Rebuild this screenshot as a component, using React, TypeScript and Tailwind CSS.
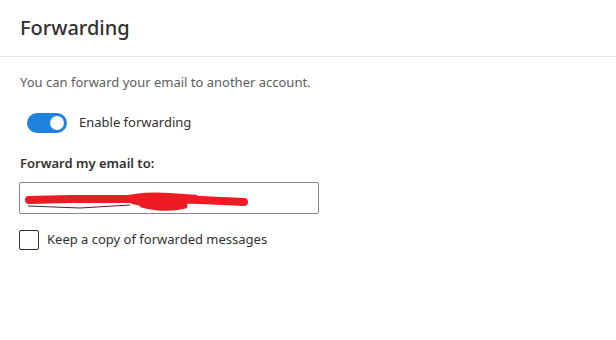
import React from "react";

export default function App() {
  return (
    <div className="w-[616px] h-[340px] bg-white text-[#323130]" style={{ fontFamily: '"Segoe UI", "Noto Sans", "Open Sans", sans-serif' }}>
      <div className="h-[57px] border-b border-[#edebe9] px-5 flex items-center">
        <h1 className="text-[20px] font-medium text-[#323130] leading-none -mt-[1px]">Forwarding</h1>
      </div>
      <div className="px-5 pt-[15px]">
        <p className="text-[13px] text-[#605e5c] leading-[20px]">You can forward your email to another account.</p>
        <div className="flex items-center mt-[21px] ml-[7px] h-[20px]">
          <div className="w-[40px] h-[20px] rounded-full bg-[#1f82dd] flex items-center justify-end pr-[3px]">
            <div className="w-[14px] h-[14px] rounded-full bg-white" />
          </div>
          <span className="ml-[12px] text-[13px] text-[#323130]">Enable forwarding</span>
        </div>
        <div className="mt-[20px] text-[13px] font-semibold text-[#323130] leading-[20px]">Forward my email to:</div>
        <div className="mt-[9px] -ml-[1px] w-[300px] h-[32px] border border-[#8a8886] rounded-[2px] relative">
          <svg className="absolute left-0 top-0" width="298" height="30" viewBox="0 0 298 30">
            <path d="M8 23 L60 25 L110 22" stroke="#323130" strokeWidth="1" fill="none" />
            <path d="M9 17 L50 16 L100 16 L140 16 L180 17 L224 19" stroke="#ed1c24" strokeWidth="8" strokeLinecap="round" fill="none" />
            <path d="M100 14 Q120 8 150 10 L178 12 L165 23 L135 26 L112 21 Z" fill="#ed1c24" />
            <path d="M122 22 Q145 28 165 23" stroke="#ed1c24" strokeWidth="5" strokeLinecap="round" fill="none" />
          </svg>
        </div>
        <label className="flex items-center mt-[16px] -ml-[1px]">
          <span className="w-[20px] h-[20px] border border-[#323130] rounded-[2px] bg-white" />
          <span className="ml-[8px] text-[13px] text-[#323130]">Keep a copy of forwarded messages</span>
        </label>
      </div>
    </div>
  );
}
